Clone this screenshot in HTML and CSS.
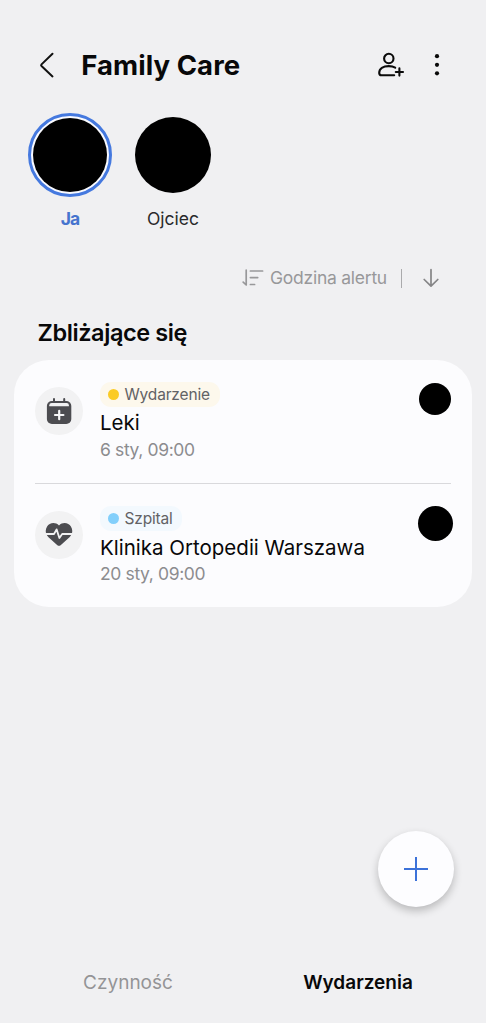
FILE: index.html
```html
<!DOCTYPE html>
<html lang="pl">
<head>
<meta charset="utf-8">
<meta name="viewport" content="width=device-width, initial-scale=1">
<title>Family Care</title>
<link rel="stylesheet" href="styles.css">
</head>
<body>
<div class="screen">
  <header class="header">
    <svg class="back" width="16" height="28" viewBox="0 0 16 28" fill="none" stroke="#111" stroke-width="2" stroke-linecap="round" stroke-linejoin="round"><path d="M13.5 2.8 2.5 13.4Q1.7 14.2 2.5 15L13.5 25.4"/></svg>
    <h1 class="title"><span>Family Care</span></h1>
    <svg class="add-person" width="28" height="28" viewBox="0 0 28 28" fill="none" stroke="#0a0a0a" stroke-width="2.1" stroke-linecap="round" stroke-linejoin="round"><circle cx="11.8" cy="7.5" r="4.7"/><path d="M17.2 24.2H4.4Q2.2 24.2 2.2 22C2.2 17.6 6.2 15.1 11.8 15.1C14.3 15.1 16.5 15.6 18.2 16.6M18.8 21H26M22.4 17.4V24.6"/></svg>
    <svg class="more" width="6" height="24" viewBox="0 0 6 24" fill="#0a0a0a"><circle cx="3" cy="3.2" r="2.1"/><circle cx="3" cy="11.8" r="2.1"/><circle cx="3" cy="20.3" r="2.1"/></svg>
  </header>

  <nav class="people">
    <div class="person selected"><div class="avatar"><i></i></div><span class="name name-me">Ja</span></div>
    <div class="person"><div class="avatar"><i></i></div><span class="name name-father">Ojciec</span></div>
  </nav>

  <div class="sort">
    <svg width="24" height="20" viewBox="0 0 24 20" fill="none" stroke="#98989a" stroke-width="1.7" stroke-linecap="round" stroke-linejoin="round"><path d="M5.2 2.2V17L2.2 14.2M9.4 3H21.6M9.4 9.6H16.7M9.4 16.5H13.6"/></svg>
    <span class="sort-label">Godzina alertu</span>
    <span class="sort-divider"></span>
    <svg class="sort-arrow" width="18" height="20" viewBox="0 0 18 20" fill="none" stroke="#858587" stroke-width="1.7" stroke-linecap="round" stroke-linejoin="round"><path d="M9 1.7V18M2.2 11.5 9 18.2 15.8 11.5"/></svg>
  </div>

  <h2 class="section-title"><span>Zbliżające się</span></h2>

  <main class="card">
    <article class="event">
      <div class="event-icon">
        <svg width="26" height="28" viewBox="0 0 26 28"><path d="M8 2V6M18.2 2V6" stroke="#4c4c50" stroke-width="2" stroke-linecap="round"/><rect x=".9" y="4" width="24.4" height="23" rx="5" fill="#4c4c50"/><path d="M3.3 9.3V8.2Q3.3 5.9 5.6 5.9H20.6Q22.9 5.9 22.9 8.2V9.3Z" fill="#f2f2f3"/><path d="M9 18H17.4M13.2 13.8V22.2" stroke="#f6f6f7" stroke-width="2.2" stroke-linecap="round"/></svg>
      </div>
      <div class="event-body">
        <div class="tag tag-event"><i></i><span>Wydarzenie</span></div>
        <div class="event-name name-leki">Leki</div>
        <div class="event-date date-first">6 sty, 09:00</div>
      </div>
      <div class="owner"></div>
    </article>
    <article class="event event-second">
      <div class="event-icon">
        <svg width="28" height="26" viewBox="0 0 28 26"><path d="M14 3.4C10-.8 4.2.9 2.1 4.4C-.2 8.3.5 12.4 3.5 15.2L12.1 23Q14 24.7 15.9 23L24.5 15.2C27.5 12.4 28.2 8.3 25.9 4.4C23.8.9 18 -.8 14 3.4Z" fill="#4c4c50"/><path d="M0 12H9L11.6 7.4 14.4 16 17.2 12H28" fill="none" stroke="#f2f2f3" stroke-width="1.8" stroke-linejoin="round"/></svg>
      </div>
      <div class="event-body">
        <div class="tag tag-hospital"><i></i><span>Szpital</span></div>
        <div class="event-name name-clinic">Klinika Ortopedii Warszawa</div>
        <div class="event-date date-second">20 sty, 09:00</div>
      </div>
      <div class="owner owner-large"></div>
    </article>
  </main>

  <button class="fab" aria-label="Dodaj"><svg width="26" height="26" viewBox="0 0 26 26" fill="none" stroke="#3c72d9" stroke-width="2"><path d="M1 13H25M13 1V25"/></svg></button>

  <footer class="tabs">
    <div class="tab"><span class="tab-activity">Czynność</span></div>
    <div class="tab active"><span class="tab-events">Wydarzenia</span></div>
  </footer>
</div>
</body>
</html>
```
FILE: styles.css
```css
* { box-sizing: border-box; }
body { margin: 0; background: #f0f0f2; color: #080809; font-family: Inter, "Noto Sans", sans-serif; }
svg { display: block; flex: none; }
.screen { width: 486px; height: 1023px; display: flex; flex-direction: column; overflow: hidden; background: #f0f0f2; }
.header { height: 96px; padding: 34px 46px 0 39px; display: flex; align-items: center; flex: none; }
.title { margin: 0 auto 0 26.3px; font-size: 27.5px; line-height: 36px; font-weight: 700; letter-spacing: .06px; white-space: nowrap; }
.more { margin-left: 29px; }
.people { display: flex; gap: 19px; padding: 17px 28px 0; height: 151px; flex: none; }
.person { width: 84px; display: flex; flex-direction: column; align-items: center; }
.avatar { width: 84px; height: 84px; border-radius: 50%; display: grid; place-items: center; flex: none; }
.avatar i { width: 76px; height: 76px; border-radius: 50%; background: #000; }
.selected .avatar { border: 3px solid #4579df; background: #f9faff; }
.selected .avatar i { width: 74px; height: 74px; }
.name { font-size: 17.5px; line-height: 24px; margin-top: 10px; color: #29292b; white-space: nowrap; }
.name-me { color: #4674ce; font-weight: 700; letter-spacing: -.9px; }
.name-father { letter-spacing: 0; }
.sort { height: 62px; padding: 0 46px 0 241px; display: flex; align-items: center; flex: none; color: #98989a; }
.sort-label { font-size: 17.5px; line-height: 24px; margin-left: 5px; width: 118px; letter-spacing: -.25px; white-space: nowrap; }
.sort-divider { width: 1px; height: 19px; margin-left: 13px; background: #aaaaac; }
.sort-arrow { margin-left: 20px; }
.section-title { margin: 0; padding: 9px 0 0 37.5px; height: 51px; font-size: 23.5px; line-height: 30px; font-weight: 600; letter-spacing: -.4px; flex: none; white-space: nowrap; }
.card { margin: 0 14px; height: 247px; padding: 0 21px; border-radius: 35px; background: #fcfcfe; flex: none; }
.event { height: 124px; padding-top: 22px; display: flex; border-bottom: 1px solid #d9d9dc; }
.event-second { border: 0; height: 123px; padding-top: 22px; }
.event-icon { width: 48px; height: 48px; margin-top: 5px; border-radius: 50%; background: #f2f2f3; display: grid; place-items: center; flex: none; }
.event-body { margin-left: 17px; flex: 1; min-width: 0; white-space: nowrap; }
.tag { width: 120px; height: 25px; border-radius: 11px; padding-left: 8px; display: flex; align-items: center; font-size: 15.5px; color: #626265; background: #fdf8ec; }
.tag i { width: 11px; height: 11px; border-radius: 50%; background: #fbcb25; margin-right: 5.5px; flex: none; }
.tag span { letter-spacing: -.17px; }
.tag-hospital { width: 82px; background: #f3f9fe; }
.tag-hospital i { background: #82cffb; }
.event-name { font-size: 20.5px; line-height: 28px; margin-top: 2px; letter-spacing: 0; }
.name-clinic { margin-top: 3px; }
.event-date { font-size: 17.5px; line-height: 24px; margin-top: 1px; color: #8c8c8f; letter-spacing: -.37px; }
.date-second { margin-top: 0; }
.owner { width: 32px; height: 32px; margin-top: .5px; border-radius: 50%; background: #000; flex: none; }
.owner-large { width: 35px; height: 35px; margin: -.5px -1.5px 0 0; }
.fab { width: 76px; height: 76px; margin: 224px 32px 0 auto; padding: 0; border: 0; border-radius: 50%; background: #fdfdff; box-shadow: 0 4px 8px rgba(0,0,0,.23); display: grid; place-items: center; flex: none; }
.tabs { height: 116px; padding: 61px 13px 0; display: flex; font-size: 19px; line-height: 30px; color: #949496; }
.tab { flex: 1; text-align: center; white-space: nowrap; }
.active { color: #080809; font-weight: 600; }
```
